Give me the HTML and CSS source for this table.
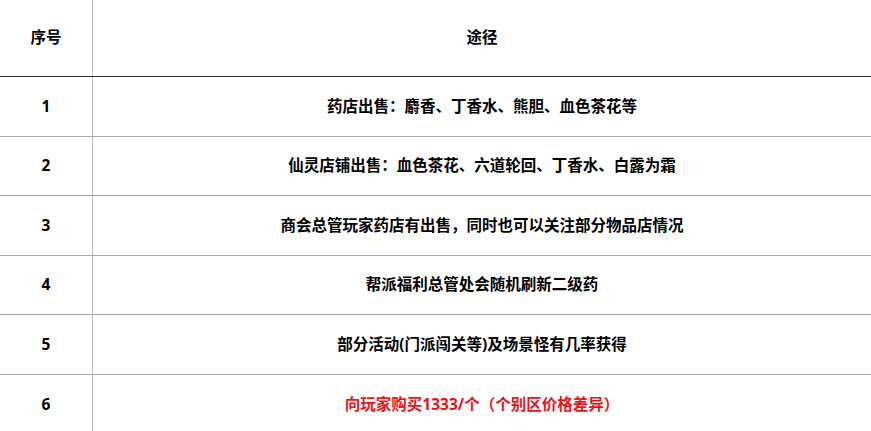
FILE: index.html
```html
<!DOCTYPE html>
<html lang="zh">
<head>
<meta charset="utf-8">
<link rel="stylesheet" href="styles.css">
</head>
<body>
<div class="table">
  <div class="row head">
    <div class="cell num">序号</div>
    <div class="cell way">途径</div>
  </div>
  <div class="row">
    <div class="cell num">1</div>
    <div class="cell way">药店出售：麝香、丁香水、熊胆、血色茶花等</div>
  </div>
  <div class="row">
    <div class="cell num">2</div>
    <div class="cell way">仙灵店铺出售：血色茶花、六道轮回、丁香水、白露为霜</div>
  </div>
  <div class="row">
    <div class="cell num">3</div>
    <div class="cell way">商会总管玩家药店有出售，同时也可以关注部分物品店情况</div>
  </div>
  <div class="row">
    <div class="cell num">4</div>
    <div class="cell way">帮派福利总管处会随机刷新二级药</div>
  </div>
  <div class="row">
    <div class="cell num">5</div>
    <div class="cell way">部分活动(门派闯关等)及场景怪有几率获得</div>
  </div>
  <div class="row">
    <div class="cell num">6</div>
    <div class="cell way red">向玩家购买1333/个（个别区价格差异）</div>
  </div>
</div>
</body>
</html>
```

FILE: styles.css
```css
html, body {
  margin: 0;
  padding: 0;
  background: #fff;
}
body {
  font-family: "Open Sans", "Noto Sans CJK SC", sans-serif;
  font-weight: bold;
  font-size: 15.5px;
  color: #000;
  width: 871px;
  height: 431px;
  overflow: hidden;
}
.table {
  display: flex;
  flex-direction: column;
}
.row {
  display: grid;
  grid-template-columns: 92px 1fr;
  height: 59.6px;
  box-sizing: border-box;
  border-top: 1px solid #a8a8a8;
  flex: none;
}
.row.head {
  height: 76px;
  border-top: none;
}
.row.head + .row {
  border-top: 1px solid #2a2a2a;
}
.cell {
  display: flex;
  align-items: center;
  justify-content: center;
  line-height: 1;
}
.way {
  border-left: 1px solid #bdbdbd;
}
.red {
  color: #e8141b;
}
```
